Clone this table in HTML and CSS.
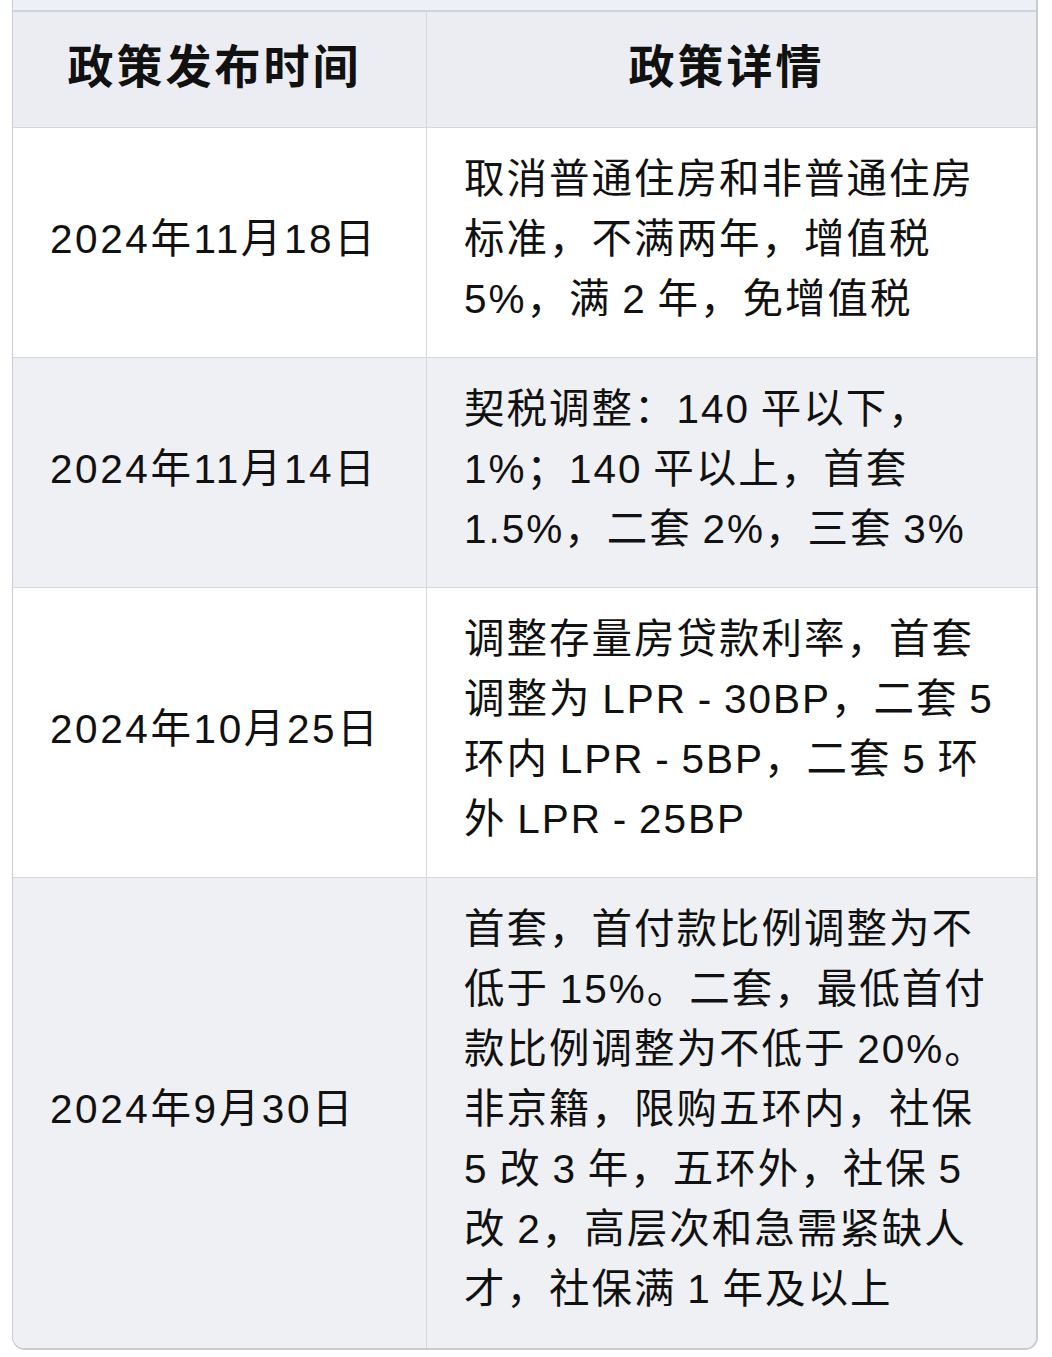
FILE: index.html
```html
<!DOCTYPE html>
<html lang="zh-CN">
<head>
<meta charset="utf-8">
<title>政策发布时间</title>
<link rel="stylesheet" href="styles.css">
</head>
<body>
<div class="page">
  <div class="frame">
    <div class="prev"></div>
    <table class="policy">
      <thead>
        <tr><th class="c-date">政策发布时间</th><th>政策详情</th></tr>
      </thead>
      <tbody>
        <tr>
          <td class="c-date">2024年11月18日</td>
          <td>取消普通住房和非普通住房<br>标准，不满两年，增值税<br>5%，满 2 年，免增值税</td>
        </tr>
        <tr>
          <td class="c-date">2024年11月14日</td>
          <td>契税调整：140 平以下，<br>1%；140 平以上，首套<br>1.5%，二套 2%，三套 3%</td>
        </tr>
        <tr>
          <td class="c-date">2024年10月25日</td>
          <td>调整存量房贷款利率，首套<br>调整为 LPR - 30BP，二套 5<br>环内 LPR - 5BP，二套 5 环<br>外 LPR - 25BP</td>
        </tr>
        <tr>
          <td class="c-date">2024年9月30日</td>
          <td>首套，首付款比例调整为不<br>低于 15%。二套，最低首付<br>款比例调整为不低于 20%。<br>非京籍，限购五环内，社保<br>5 改 3 年，五环外，社保 5<br>改 2，高层次和急需紧缺人<br>才，社保满 1 年及以上</td>
        </tr>
      </tbody>
    </table>
  </div>
</div>
</body>
</html>
```
FILE: styles.css
```css
html, body {
  margin: 0;
  padding: 0;
  background: #ffffff;
}
body {
  font-family: "Liberation Sans", "Noto Sans CJK SC", sans-serif;
  color: #111111;
}
.page {
  padding: 0 14px 0 12px;
}
.frame {
  border-left: 1px solid #c9cbd0;
  border-right: 2px solid #c9cbd0;
  border-bottom: 2px solid #c9cbd0;
  border-radius: 0 0 13px 13px;
  overflow: hidden;
}
.prev {
  height: 10px;
  background: #eef0f8;
  border-bottom: 2px solid #d2d4da;
}
.policy {
  width: 100%;
  border-collapse: separate;
  border-spacing: 0;
  table-layout: fixed;
}
.policy th,
.policy td {
  box-sizing: border-box;
  border-bottom: 1px solid #d6d8dd;
  line-height: 60px;
}
.policy th {
  background: #ebedf2;
  font-weight: 700;
  font-size: 46px;
  letter-spacing: 3px;
  padding: 25px 10px 30px 0;
  text-align: center;
}
.policy .c-date {
  width: 414px;
  border-right: 1px solid #d6d8dd;
}
.policy td {
  font-size: 40.5px;
  letter-spacing: 2px;
  word-spacing: -2.5px;
  font-weight: 400;
  padding: 21px 10px 28px 37px;
  vertical-align: middle;
  text-align: left;
  white-space: nowrap;
  background: #ffffff;
}
.policy td.c-date {
  letter-spacing: 2.6px;
}
.policy tbody tr:nth-child(even) td {
  background: #eef0f4;
}
.policy tbody tr:last-child td {
  border-bottom: 0;
  padding-bottom: 29px;
}
```
